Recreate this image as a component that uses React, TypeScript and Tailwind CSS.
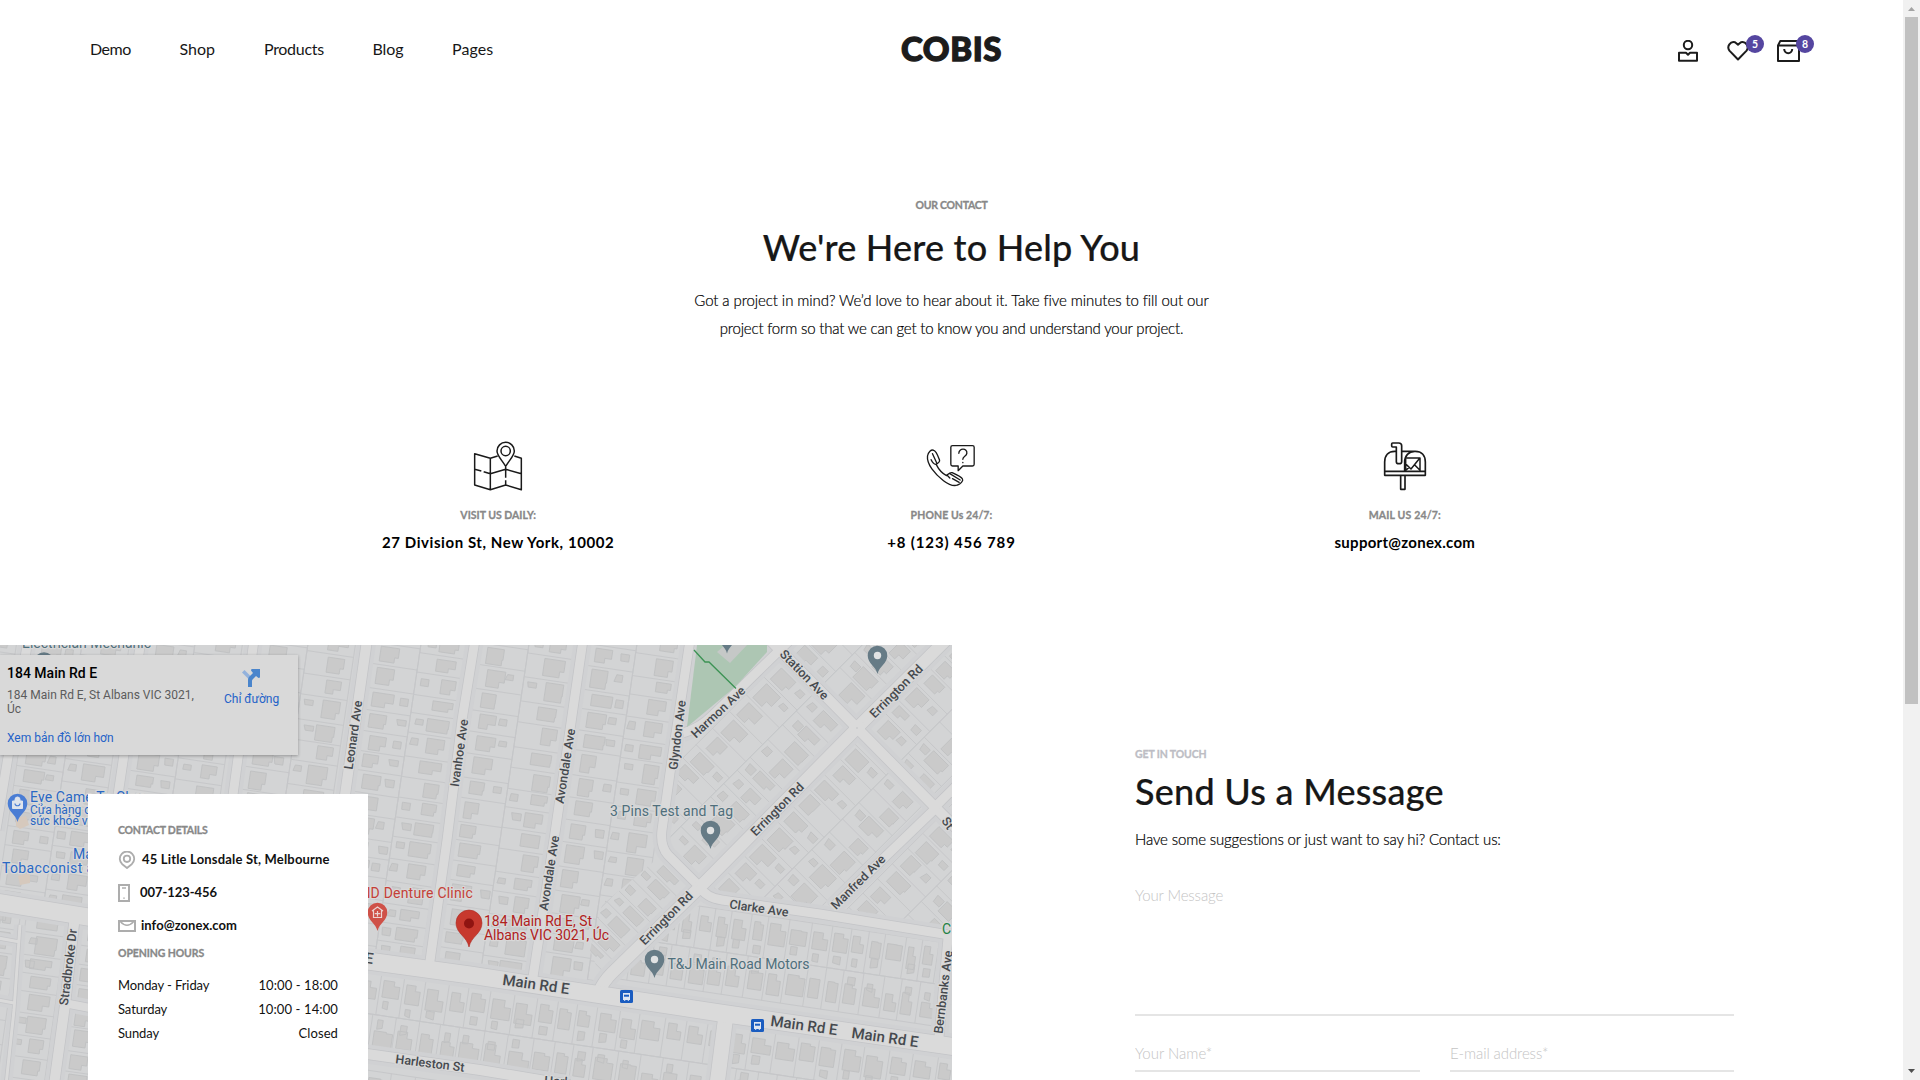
import React from "react";

/* ---------- Header ---------- */

const NAV = ["Demo", "Shop", "Products", "Blog", "Pages"];
const NAV_STYLE = [
  "w-[41px] tracking-[-0.5px]",
  "w-[36px]",
  "w-[60px] tracking-[-0.3px]",
  "w-[31px] tracking-[-0.1px]",
  "w-[42px] tracking-[0.1px]",
];

function Badge({ children }: { children: React.ReactNode }) {
  return (
    <span className="absolute left-[19px] -top-[5px] flex size-[18px] items-center justify-center rounded-full bg-[#5546a0] text-[10.5px] leading-none font-bold text-white">
      {children}
    </span>
  );
}

function Header() {
  return (
    <header className="grid h-[97px] grid-cols-3 items-center pl-[90px] pr-[98px]">
      <nav className="flex gap-[48.5px] pt-px text-base text-[#171717]">
        {NAV.map((n, i) => (
          <a key={n} className={`whitespace-nowrap ${NAV_STYLE[i]}`}>{n}</a>
        ))}
      </nav>
      <div className="pl-[8px] text-center text-[33px] leading-none font-black tracking-[0.6px] text-[#1c1c1c] [-webkit-text-stroke:1.3px_#1c1c1c]">COBIS</div>
      <div className="flex justify-end pt-[5px] text-[#1c1c1c]">
        <svg className="mr-[28px] h-[22px] w-[22px]" viewBox="0 0 22 22" fill="none" stroke="currentColor" strokeWidth="2" strokeLinejoin="round">
          <circle cx="11" cy="5" r="4.2" />
          <path d="M2 12.8h7l2 2 2-2h7v8H2z" />
        </svg>
        <div className="relative mr-[28px] h-[22px] w-[22px]">
          <svg className="h-[22px] w-[22px]" viewBox="0 0 22 22" fill="none" stroke="currentColor" strokeWidth="2" strokeLinejoin="round">
            <path d="M11 19.5 2.4 10.6C-.6 6.500 3.500 .8 8 2.300L11 4.600 14 2.300C18.500 .8 22.600 6.500 19.600 10.600z" />
          </svg>
          <Badge>5</Badge>
        </div>
        <div className="relative h-[22px] w-[28px]">
          <svg className="h-[22px] w-[24px]" viewBox="0 0 24 22" fill="none" stroke="currentColor" strokeWidth="2" strokeLinejoin="round">
            <path d="M1 5.500 3.200 1.100h17L22 5.500V21H1zM1 5.500h21M7.200 9c0 5.500 8 5.500 8 0" />
          </svg>
          <Badge>8</Badge>
        </div>
      </div>
    </header>
  );
}

/* ---------- Contact channels ---------- */

const iconClass = "h-[60px] w-[70px] text-[#1a1a1a]";
const labelClass = "text-[10.5px] leading-4 font-bold [-webkit-text-stroke:0.3px]";
const bodyClass = "text-[15px] leading-7 font-light text-black [-webkit-text-stroke:0.2px]";

const MapIcon = () => (
  <svg className={iconClass} viewBox="-6 0 210 180" fill="none" stroke="currentColor" strokeWidth="4.500" strokeLinejoin="round">
    <path d="M98 63 76 70 29 56V150l47 14 46-14 47 14V70l-21-7M76 70v94M29 103l20 5M56 110l20 6 46-13 47 13M122 96v32M122 136v14" />
    <path d="M122 94C110 74 96 62 96 48a26 26 0 0 1 52 0c0 14-14 26-26 46z" />
    <circle cx="122" cy="48" r="14" />
  </svg>
);
const PhoneIcon = () => (
  <svg className={iconClass} viewBox="4.5 0 210 180" fill="none" stroke="currentColor" strokeWidth="4" strokeLinejoin="round" strokeLinecap="round">
    <path d="M58 46c-8-4-17 6-19 17-3 24 22 54 48 74 16 12 32 17 42 13 9-3 18-12 15-18-2-4-22-15-31-19-7-2-11 4-17 9-13-7-24-20-31-34 7-4 12-7 10-13-3-8-9-26-17-29z" />
    <path d="M54 56l13 29M50 74c4 9 7 13 14 14M106 116l31 19M98 121l8 8M114 131l20 11" />
    <path d="M114 32h60q5 0 5 5v51q0 5-5 5h-29l-14 14V93h-17q-5 0-5-5V37q0-5 5-5z" />
    <path d="M133 55c0-17 26-16 24 0-1 9-12 9-12 18M145 82v1" />
  </svg>
);
const MailboxIcon = () => (
  <svg className={iconClass} viewBox="0 0 210 180" fill="none" stroke="currentColor" strokeWidth="5" strokeLinejoin="round">
    <path d="M79 49h-5c-18 0-30 12-30 32v40h122V81c0-20-12-32-30-32H94M104 108V81c0-18 12-32 30-32M44 109h122" />
    <path d="M79 36H68q-3 0-3-3v-6q0-3 3-3h18q9 0 9 8v48q0 6-8 6t-8-6z" />
    <path d="M107 69h43v40M107 72v36M106 86l17 16 26-32M135 91l15 15M117 97l-12 11" strokeWidth="4.500" />
    <path d="M92 122v41h13v-41" />
  </svg>
);

const CHANNELS = [
  { icon: <MapIcon />, label: "VISIT US DAILY:", value: "27 Division St, New York, 10002", ls: "", vs: "tracking-[0.57px]" },
  { icon: <PhoneIcon />, label: "PHONE Us 24/7:", value: "+8 (123) 456 789", ls: "tracking-[0.1px]", vs: "tracking-[0.85px]" },
  { icon: <MailboxIcon />, label: "MAIL US 24/7:", value: "support@zonex.com", ls: "tracking-[0.18px]", vs: "tracking-[0.28px]" },
];

function Intro() {
  return (
    <section className="flex h-[548px] flex-col items-center pt-[100px] text-[#171717]">
      <p className={`${labelClass} tracking-[-0.25px] text-[#888]`}>OUR CONTACT</p>
      <h1 className="mt-3 text-[36px] leading-[44px] font-medium tracking-[0.2px] [-webkit-text-stroke:0.2px]">We're Here to Help You</h1>
      <p className={`${bodyClass} mt-[17px] text-center`}>
        <span className="block tracking-[-0.08px]">Got a project in mind? We’d love to hear about it. Take five minutes to fill out our</span>
        <span className="block tracking-[-0.18px]">project form so that we can get to know you and understand your project.</span>
      </p>
      <div className="mt-[93px] grid w-[1360px] grid-cols-3">
        {CHANNELS.map((c) => (
          <div key={c.label} className="flex flex-col items-center">
            {c.icon}
            <p className={`${labelClass} mt-3 text-[#888] ${c.ls}`}>{c.label}</p>
            <p className={`mt-2 text-[15px] leading-[23px] font-bold text-black ${c.vs}`}>{c.value}</p>
          </div>
        ))}
      </div>
    </section>
  );
}

/* ---------- Map ---------- */

type Strip = { x0: number; x1: number; front: "l" | "r" };

function makeRandom(seed: number) {
  let s = seed;
  return () => {
    s = (s * 16807) % 2147483647;
    return s / 2147483647;
  };
}

/* A set of parallel rows of lots, each with a house and sometimes a shed. */
function Lots({ at, angle, from, to, strips, seed, clip, step = 21 }: {
  at: [number, number]; angle: number; from: number; to: number; strips: Strip[]; seed: number; clip: string; step?: number;
}) {
  const rnd = makeRandom(seed);
  let lines = "";
  let houses = "";
  strips.forEach(({ x0, x1, front }) => {
    lines += `M${x0} ${from}V${to}M${x1} ${from}V${to}`;
    let y = from + rnd() * 6;
    while (y < to) {
      const h = step * (0.85 + rnd() * 0.35);
      lines += `M${x0} ${y.toFixed(1)}H${x1}`;
      const w = 14 + rnd() * 8;
      const hh = h - 5 - rnd() * 4;
      const off = 6 + rnd() * 4;
      const x = front === "l" ? x0 + off : x1 - off - w;
      const yy = y + 2.5 + rnd() * 1.5;
      const n = rnd() * 0.5;
      houses += `M${x.toFixed(1)} ${yy.toFixed(1)}h${w.toFixed(1)}v${(hh * 0.65).toFixed(1)}h${(-w * n).toFixed(1)}v${(hh * 0.35).toFixed(1)}H${x.toFixed(1)}z`;
      if (rnd() > 0.45) {
        const sx = front === "l" ? x1 - 12 - rnd() * 6 : x0 + 3 + rnd() * 5;
        houses += `M${sx.toFixed(1)} ${(yy + 2).toFixed(1)}h${(6 + rnd() * 4).toFixed(1)}v${(5 + rnd() * 3).toFixed(1)}h-8z`;
      }
      y += h;
    }
  });
  return (
    <g clipPath={`url(#${clip})`}>
      <g transform={`translate(${at[0]} ${at[1]}) rotate(${angle})`}>
        <path d={lines} stroke="#c5c6c8" strokeWidth="0.900" fill="none" />
        <path d={houses} fill="#cacaca" stroke="#c0c1c2" strokeWidth="0.900" />
      </g>
    </g>
  );
}

const pair = (a: number): Strip[] => [
  { x0: a + 7, x1: a + 54, front: "l" },
  { x0: a + 54, x1: a + 101, front: "r" },
];

const CLIPS: Record<string, string> = {
  north: "0,645 690,645 661,837 680,868 600,985 0,898",
  diag: "692,645 952,645 952,930 820,908 715,895 664,840",
  wedge: "658,858 692,892 600,975 590,950 602,905",
  clarke: "705,900 820,920 940,938 932,1035 612,985",
  south: "368,968 952,1057 952,1080 368,1080",
  southwest: "0,912 88,928 88,1080 0,1080",
};

const STREETS: { d: string; w: number }[] = [
  { d: "M28 640 8 757-4 830", w: 9 },
  { d: "M141 640 118 795 100 918", w: 9 },
  { d: "M254 640 233 795 213 935", w: 9 },
  { d: "M367 640 345 795 322 955", w: 10 },
  { d: "M475 640 462 720 447 840 429 968", w: 9 },
  { d: "M583 640 555 833 533 977", w: 9 },
  { d: "M690 640 670 773 662 830Q660 846 668 855L698 885", w: 9 },
  { d: "M683 733Q700 728 712 716L792 638", w: 9 },
  { d: "M770 640 857 728 935 807 958 830", w: 10 },
  { d: "M956 630 857 728 700 887 612 973Q603 982 599 992", w: 12 },
  { d: "M935 807 958 784", w: 9 },
  { d: "M937 807 832 908", w: 9 },
  { d: "M698 885Q706 898 722 900L820 914 956 936", w: 9 },
  { d: "M948 938 938 1048", w: 9 },
  { d: "M75 915Q70 960 65 1005L54 1085", w: 10 },
  { d: "M64 1003 90 1008", w: 8 },
  { d: "M20 925 14 1010 6 1085M-2 938 20 942M-2 1000 14 1003", w: 3 },
  { d: "M360 1053 480 1070 570 1085", w: 10 },
  { d: "M726 1015 717 1085", w: 15 },
  { d: "M-4 902 88 917 368 961 470 975 720 1013 956 1047", w: 17 },
];

const STREET_NAMES: { t: string; x: number; y: number; r: number; s?: number }[] = [
  { t: "Leonard Ave", x: 353, y: 735, r: -82 },
  { t: "Ivanhoe Ave", x: 459, y: 753, r: -82 },
  { t: "Avondale Ave", x: 565, y: 766, r: -81 },
  { t: "Avondale Ave", x: 549, y: 873, r: -81 },
  { t: "Glyndon Ave", x: 677, y: 735, r: -83 },
  { t: "Harmon Ave", x: 718, y: 712, r: -43 },
  { t: "Station Ave", x: 804.5, y: 674.5, r: 46 },
  { t: "Errington Rd", x: 896, y: 691, r: -45 },
  { t: "Errington Rd", x: 777, y: 809, r: -45 },
  { t: "Errington Rd", x: 666, y: 918, r: -45 },
  { t: "Manfred Ave", x: 858, y: 882, r: -45 },
  { t: "Clarke Ave", x: 759, y: 908, r: 8 },
  { t: "Bernbanks Ave", x: 943, y: 992, r: -83 },
  { t: "Stradbroke Dr", x: 68, y: 967, r: -83 },
  { t: "Harleston St", x: 430, y: 1063, r: 7 },
  { t: "Harl", x: 556, y: 1081, r: 4 },
  { t: "St", x: 948, y: 823, r: 55 },
  { t: "E", x: 369, y: 959, r: 8, s: 15 },
  { t: "Main Rd E", x: 536, y: 985, r: 8, s: 15 },
  { t: "Main Rd E", x: 804, y: 1026, r: 8, s: 15 },
  { t: "Main Rd E", x: 885, y: 1038, r: 8, s: 15 },
];

function Pin({ x, y, fill, children }: { x: number; y: number; fill: string; children?: React.ReactNode }) {
  return (
    <g transform={`translate(${x} ${y})`}>
      <path d="M0 18.500C-1.500 11-9.800 8-9.800 0a9.800 9.800 0 0 1 19.600 0C9.800 8 1.500 11 0 18.500z" fill={fill} />
      {children ?? <circle r="3.700" fill="#e0e2e3" />}
    </g>
  );
}

function BusStop({ x, y }: { x: number; y: number }) {
  return (
    <g transform={`translate(${x} ${y})`}>
      <rect x="-6.500" y="-6.500" width="13" height="13" rx="1.500" fill="#1a5cc0" />
      <path d="M-3.500-3.500h7v7h-1.200v1h-1v-1h-2.600v1h-1v-1h-1.200z" fill="#dfe6f2" />
      <path d="M-2.500-1.800h5v2h-5z" fill="#1a5cc0" />
    </g>
  );
}

const STREET_X = [-85, 28, 141, 254, 367, 475, 583];

function MapDrawing() {
  return (
    <svg className="block h-[435px] w-[952px] font-[Roboto,sans-serif]" viewBox="0 645 952 435">
      <defs>
        {Object.entries(CLIPS).map(([id, points]) => (
          <clipPath key={id} id={id}><polygon points={points} /></clipPath>
        ))}
      </defs>
      <rect x="0" y="645" width="952" height="435" fill="#d3d4d5" />
      {STREET_X.map((x, i) => (
        <Lots key={x} at={[x, 640]} angle={8.4} from={-20} to={390} strips={pair(0)} seed={311 + i * 77} clip="north" />
      ))}
      <polygon points={CLIPS.wedge} fill="#d3d4d5" />
      <Lots at={[857, 728]} angle={45} from={8} to={260} strips={[...pair(-109), ...pair(0), { x0: 121, x1: 168, front: "l" }, { x0: 168, x1: 215, front: "r" }]} seed={901} clip="diag" />
      <Lots at={[857, 728]} angle={45} from={-160} to={-8} strips={[...pair(-109), ...pair(0), ...pair(114)]} seed={1201} clip="diag" />
      <Lots at={[857, 728]} angle={45} from={215} to={380} strips={[{ x0: -54, x1: -8, front: "r" }]} seed={77} clip="wedge" step={17} />
      <Lots at={[605, 985]} angle={-81.500} from={0} to={350} strips={[{ x0: 8, x1: 50, front: "l" }, { x0: 50, x1: 92, front: "r" }]} seed={431} clip="clarke" step={19} />
      <Lots at={[368, 961]} angle={-81.500} from={-10} to={600} strips={[{ x0: -52, x1: -10, front: "r" }, { x0: -92, x1: -52, front: "l" }, { x0: -150, x1: -108, front: "r" }]} seed={653} clip="south" step={22} />
      <Lots at={[75, 915]} angle={8} from={0} to={180} strips={[{ x0: -48, x1: -7, front: "r" }, { x0: 7, x1: 50, front: "l" }, { x0: -90, x1: -54, front: "l" }]} seed={553} clip="southwest" />

      <path d="M16 818l10-2 3 9-9 4-4-3zM18 876l12-3v10l-10 2z" fill="#d6c9bd" />
      <g fill="none" strokeLinejoin="round">
        {STREETS.map((s) => <path key={s.d} d={s.d} stroke="#d0d1d3" strokeWidth={s.w + 9} />)}
        {STREETS.map((s) => <path key={s.d} d={s.d} stroke="#c3c4c7" strokeWidth={s.w + 1.500} />)}
        {STREETS.map((s) => <path key={s.d} d={s.d} stroke="#dadada" strokeWidth={s.w} />)}
      </g>
      <path d="M697 645H767V652L735 687 687 727z" fill="#adc6b3" />
      <path d="M717 652l8-7h22l-17 18z" fill="#c5c8c7" />
      <path d="M694 650l11 12h4l27 26.500" fill="none" stroke="#3c9354" strokeWidth="1.300" />
      <circle cx="857" cy="728" r="8" fill="#dadada" />
      <circle cx="857" cy="728" r="0.800" fill="#c0c1c4" />

      <g fill="#45494e" fontWeight="500" textAnchor="middle" stroke="#d8d8d8" strokeWidth="2.500" paintOrder="stroke" strokeLinejoin="round">
        {STREET_NAMES.map((n, i) => (
          <text key={i} fontSize={n.s ?? 12.500} transform={`translate(${n.x} ${n.y}) rotate(${n.r})`} dy="4.500">{n.t}</text>
        ))}
      </g>

      <Pin x={727} y={635} fill="#667b86" />
      <Pin x={44} y={662} fill="#667b86" />
      <Pin x={877.500} y={655.500} fill="#667b86" />
      <Pin x={710.500} y={830.500} fill="#667b86" />
      <Pin x={654.500} y={959.500} fill="#667b86" />
      <Pin x={17.500} y={803.500} fill="#4a7dd4">
        <path d="M-5-2.500H5v7.500H-5zM-2.500-2.500v-1.500a2.500 2.500 0 0 1 5 0v1.500" fill="#dfe4ec" stroke="#dfe4ec" strokeWidth="1" />
        <path d="M-2.500 0c0 3 5 3 5 0" fill="none" stroke="#4a7dd4" strokeWidth="1.200" />
      </Pin>
      <Pin x={377.500} y={912.500} fill="#cf5148">
        <path d="M-5.500-1.500 0-5.500l5.500 4M-4-2v7h8v-7M0-1.500V4M-2.700 1.200h5.400" fill="none" stroke="#ecd5d3" strokeWidth="1.200" />
      </Pin>
      <BusStop x={626.500} y={996.500} />
      <BusStop x={757.500} y={1025.500} />

      <g fontSize="14" stroke="#d8d8d8" strokeWidth="2.500" paintOrder="stroke" strokeLinejoin="round">
        <g fill="#4f6f7c">
          <text x="22" y="648" textLength="129">Electrician Mechanic</text>
          <text x="610" y="816" textLength="123">3 Pins Test and Tag</text>
          <text x="667.500" y="969" textLength="142">T&amp;J Main Road Motors</text>
        </g>
        <g fill="#2a68c4">
          <text x="30" y="802" textLength="113">Eye Came To Clay</text>
          <text x="30" y="814" fontSize="12">Cửa hàng chăm</text>
          <text x="30" y="825" fontSize="12">sức khỏe và</text>
          <text x="73" y="859">Main</text>
          <text x="2" y="873" letterSpacing="0.350">Tobacconist and</text>
        </g>
        <text x="473" y="898" fill="#c53f37" textAnchor="end" letterSpacing="0.200">ND Denture Clinic</text>
        <g fill="#b0201c">
          <text x="484" y="926" textLength="108">184 Main Rd E, St</text>
          <text x="484" y="940" textLength="125">Albans VIC 3021, Úc</text>
        </g>
        <text x="942" y="934" fill="#1c8043">C</text>
      </g>
      <g transform="translate(469 923.500)">
        <path d="M0 23.500C-2 13-13 10-13-.5a13 13 0 0 1 26 0C13 10 2 13 0 23.500z" fill="#c7392e" stroke="#ad2a22" strokeWidth="0.600" />
        <circle r="5" fill="#8f1411" />
      </g>
    </svg>
  );
}

function PlacePanel() {
  return (
    <div className="absolute top-[10px] left-0 flex h-[100px] w-[298px] bg-[#d9d9d9] pl-[7px] font-[Roboto,sans-serif] text-xs shadow-[0_1px_3px_rgba(0,0,0,0.3)]">
      <div className="w-[205px] pt-[10px]">
        <p className="text-sm leading-4 font-medium text-black">184 Main Rd E</p>
        <p className="mt-[7px] leading-[14px] text-[#5c5c5c]">184 Main Rd E, St Albans VIC 3021,<br />Úc</p>
        <p className="mt-[14px] leading-[16px] text-[#2462c8]">Xem bản đồ lớn hơn</p>
      </div>
      <div className="flex flex-col items-center pt-[14px] pl-[12px] text-[#2462c8]">
        <svg className="mr-[2px] h-[18px] w-[20px]" viewBox="0 0 20 18">
          <path d="M1 3.500 3.500 1 10 7.500 9.500 10.500 7.500 10z" fill="#93b2dc" />
          <path d="M7 18v-7c0-2 1-3 2.500-4.500L12 4l-2-2.500L10.500 0H19v8.500l-1.500.5-2.500-2-2.500 2.500c-1 1-1.500 1.500-1.500 2.500v6z" fill="#4a85cc" />
        </svg>
        <span className="mt-1 leading-4 whitespace-nowrap">Chỉ đường</span>
      </div>
    </div>
  );
}

/* ---------- Contact card ---------- */

const cardIcon = "shrink-0 text-[#adadad]";

const DETAILS = [
  {
    icon: (
      <svg className={`${cardIcon} mr-[6px] h-[18px] w-[18px]`} viewBox="0 0 18 18" fill="none" stroke="currentColor" strokeWidth="1.800">
        <path d="M9 17 4.300 13.200a7.200 7.200 0 1 1 9.400 0z" strokeLinejoin="round" /><circle cx="9" cy="7.800" r="3.200" />
      </svg>
    ),
    text: "45 Litle Lonsdale St, Melbourne",
    cls: "tracking-[0.18px]",
  },
  {
    icon: (
      <svg className={`${cardIcon} mr-[10px] h-[18px] w-[12px]`} viewBox="0 0 12 18" fill="none" stroke="currentColor" strokeWidth="2">
        <path d="M1 1h10v16H1z" /><path d="M4 4h4M5.200 14.200h1.600" strokeWidth="1.300" />
      </svg>
    ),
    text: "007-123-456",
    cls: "tracking-[-0.05px]",
  },
  {
    icon: (
      <svg className={`${cardIcon} mr-[5px] h-[12px] w-[18px]`} viewBox="0 0 18 12" fill="none" stroke="currentColor" strokeWidth="2">
        <path d="M1 1h16v10H1z" /><path d="M2.500 1.800C5 4.500 7 5.300 9 5.300s4-.8 6.500-3.500" strokeWidth="1.500" />
      </svg>
    ),
    text: "info@zonex.com",
    cls: "tracking-[0.05px]",
  },
];

const HOURS = [
  { day: "Monday - Friday", time: "10:00 - 18:00", cls: "tracking-[0.1px]" },
  { day: "Saturday", time: "10:00 - 14:00", cls: "tracking-[0.12px]" },
  { day: "Sunday", time: "Closed", cls: "tracking-[0.1px]" },
];

function ContactCard() {
  return (
    <div className="absolute top-[149px] left-[88px] h-[286px] w-[280px] bg-white px-[30px] pt-[28px] text-[13px] text-[#111]">
      <p className={`${labelClass} tracking-[-0.2px] text-[#888]`}>CONTACT DETAILS</p>
      <ul className="mt-[5px]">
        {DETAILS.map((d) => (
          <li key={d.text} className="flex h-[33px] items-center font-bold whitespace-nowrap">
            {d.icon}<span className={d.cls}>{d.text}</span>
          </li>
        ))}
      </ul>
      <p className={`${labelClass} mt-[3px] tracking-[-0.1px] text-[#888]`}>OPENING HOURS</p>
      <dl className="mt-3 leading-6">
        {HOURS.map((h) => (
          <div key={h.day} className="flex justify-between">
            <dt className="tracking-[-0.1px]">{h.day}</dt>
            <dd className={h.cls}>{h.time}</dd>
          </div>
        ))}
      </dl>
    </div>
  );
}

/* ---------- Message form ---------- */

const field = "block border-b-2 border-[#e5e5e5] bg-transparent text-[15px] font-light outline-none placeholder:text-[#c4c4c4]";

function MessageForm() {
  return (
    <form className="ml-[183px] w-[599px] pt-[101px] text-[#171717]">
      <p className={`${labelClass} tracking-[-0.13px] text-[#bdbdc4]`}>GET IN TOUCH</p>
      <h2 className="mt-[7px] text-[36px] leading-[44px] font-medium tracking-[0.26px] [-webkit-text-stroke:0.2px]">Send Us a Message</h2>
      <p className={`${bodyClass} mt-3 tracking-[-0.14px]`}>Have some suggestions or just want to say hi? Contact us:</p>
      <textarea placeholder="Your Message" className={`${field} mt-[17px] h-[146px] w-full resize-none pt-[13px] leading-6 tracking-[-0.12px]`} />
      <div className="mt-[18px] grid grid-cols-[285px_284px] gap-[30px]">
        <input placeholder="Your Name*" className={`${field} h-[38px] w-full pt-px`} />
        <input placeholder="E-mail address*" className={`${field} h-[38px] w-full pt-px tracking-[-0.1px]`} />
      </div>
    </form>
  );
}

function Scrollbar() {
  return (
    <div className="flex h-full w-[17px] flex-col items-center bg-[#f1f1f1]">
      <svg className="h-[17px] w-[17px]" viewBox="0 0 17 17"><path d="M5 11l3.500-4 3.500 4z" fill="#a3a3a3" /></svg>
      <div className="h-[687px] w-[13px] bg-[#c1c1c1]" />
      <svg className="mt-auto h-[17px] w-[17px]" viewBox="0 0 17 17"><path d="M5 6l3.500 4 3.500-4z" fill="#505050" /></svg>
    </div>
  );
}

export default function App() {
  return (
    <div className="flex h-[1080px] w-[1920px] overflow-hidden bg-white font-[Lato,sans-serif]">
      <main className="w-[1903px]">
        <Header />
        <Intro />
        <section className="flex h-[435px] overflow-hidden">
          <div className="relative w-[952px] overflow-hidden">
            <MapDrawing />
            <PlacePanel />
            <ContactCard />
          </div>
          <MessageForm />
        </section>
      </main>
      <Scrollbar />
    </div>
  );
}
